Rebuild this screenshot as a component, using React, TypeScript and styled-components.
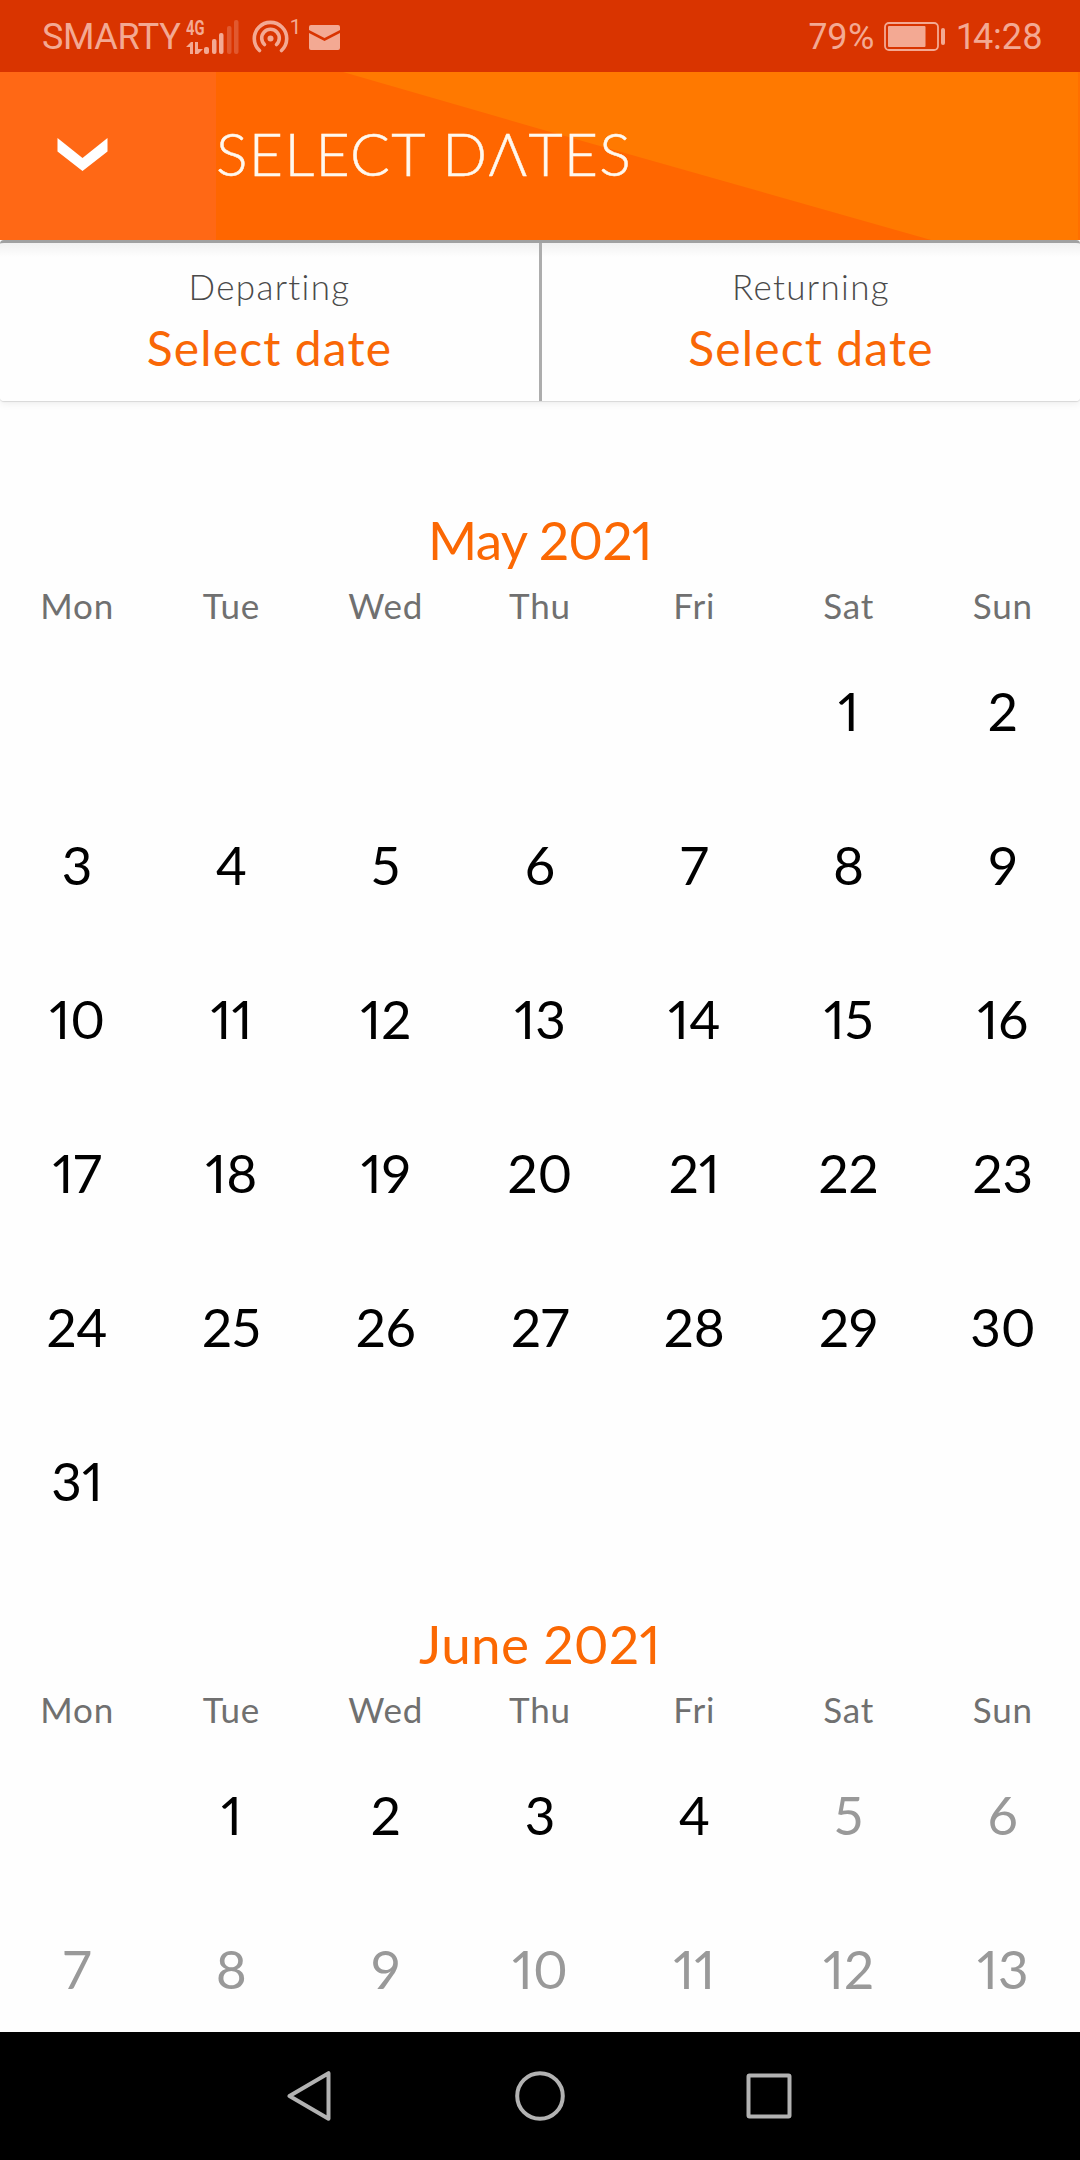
import React from 'react';
import styled, { createGlobalStyle } from 'styled-components';

const GlobalStyle = createGlobalStyle`
  *, *::before, *::after { box-sizing: border-box; }
  html, body { margin: 0; padding: 0; background: #fefefe; }
  body { font-family: Lato, "Open Sans", sans-serif; font-variant-numeric: proportional-nums; }
`;

const Screen = styled.div`
  width: 1080px;
  height: 2160px;
  display: flex;
  flex-direction: column;
  overflow: hidden;
  background: #fefefe;
`;

const StatusBar = styled.div`
  flex: none;
  height: 72px;
  padding: 2px 37px 0 42px;
  display: flex;
  align-items: center;
  justify-content: space-between;
  background: #d93400;
  color: #f3a993;
  font-family: Roboto, sans-serif;
  font-size: 36px;
`;

const StatusGroup = styled.div`
  display: flex;
  align-items: center;
`;

const StatusText = styled.span<{ $spacing?: number }>`
  letter-spacing: ${(p) => p.$spacing ?? 0}px;
  white-space: nowrap;
`;

const SignalBlock = styled.div`
  display: flex;
  align-items: flex-end;
  height: 34px;
  margin-left: 6px;
`;

const NetworkColumn = styled.div`
  display: flex;
  flex-direction: column;
  justify-content: space-between;
  width: 18px;
  height: 34px;
`;

const NetworkLabel = styled.span`
  font-size: 21px;
  font-weight: 700;
  line-height: 16px;
  width: 25px;
  transform: scaleX(0.7);
  transform-origin: left;
`;

const HotspotCount = styled.span`
  font-size: 21px;
  line-height: 16px;
  align-self: flex-start;
  margin: 0 9px 0 1px;
`;

const NotificationGroup = styled.div`
  display: flex;
  align-items: center;
  height: 36px;
  margin-left: 12px;
`;

const Icon = styled.svg`
  display: block;
  flex: none;
`;

const BatteryIcon = styled(Icon)`
  margin: 0 12px 0 10px;
`;

const Header = styled.header`
  flex: none;
  position: relative;
  z-index: 1;
  height: 168px;
  display: flex;
  background:
    linear-gradient(#ff6f00, #ff6f00) right / 2px 100% no-repeat,
    #ff6600;
`;

const CloseButton = styled.button`
  width: 216px;
  height: 168px;
  padding: 0 0 3px 57px;
  border: 0;
  background: #ff6815;
  display: flex;
  align-items: center;
`;

const TitleArea = styled.div`
  flex: 1;
  margin-right: 2px;
  padding-bottom: 4px;
  display: flex;
  align-items: center;
  background: #ff7900;
  position: relative;
`;

const Facet = styled.div`
  position: absolute;
  inset: 0;
  background: #ff6600;
  clip-path: polygon(0 0, 127px 0, 324px 57px, 715px 168px, 0 168px);
`;

const Title = styled.h1`
  position: relative;
  margin: 0;
  font-size: 59px;
  line-height: 72px;
  font-weight: 300;
  letter-spacing: 1.3px;
  color: #fff8ee;
  -webkit-text-stroke: 0.5px #fff8ee;
  white-space: nowrap;
`;

const TripCard = styled.section`
  flex: none;
  height: 161px;
  display: grid;
  grid-template-columns: 539px 3px 538px;
  border-top: 3px solid #a1a1a1;
  border-radius: 4px;
  background: linear-gradient(#f1f1f1, #fefefe 14px);
  box-shadow: 0 1px 1px #d8d8d8, 0 2px 8px #ececec;
`;

const TripField = styled.button`
  padding: 21px 0 0;
  border: 0;
  background: none;
  display: flex;
  flex-direction: column;
  align-items: center;
  font-family: inherit;
`;

const TripDivider = styled.div`
  background: #adadad;
`;

const TripLabel = styled.span`
  font-size: 35px;
  line-height: 44px;
  font-weight: 300;
  letter-spacing: 1.3px;
  color: #4a4a4a;
`;

const TripValue = styled.span`
  margin-top: 10px;
  font-size: 48px;
  line-height: 60px;
  letter-spacing: 1.1px;
  color: #f96706;
`;

const Calendar = styled.main`
  flex: 1;
  min-height: 0;
  overflow: hidden;
  padding-top: 53px;
`;

const Month = styled.section`
  display: grid;
  grid-template-rows: 126px 54px;
  grid-auto-rows: auto;
`;

const MonthName = styled.h2<{ $spacing: number }>`
  margin: 0;
  padding-top: 53px;
  text-align: center;
  font-size: 53px;
  line-height: 66px;
  font-weight: 400;
  letter-spacing: ${(p) => p.$spacing}px;
  color: #fb6803;
`;

const Week = styled.div`
  display: grid;
  grid-template-columns: repeat(7, 1fr);
  justify-items: center;
`;

const Weekday = styled.span`
  font-size: 35px;
  line-height: 50px;
  letter-spacing: 0.8px;
  color: #707070;
`;

const Day = styled.button<{ $muted?: boolean; $start?: number }>`
  height: 154px;
  padding: 0;
  border: 0;
  background: none;
  font-family: inherit;
  font-variant-numeric: inherit;
  font-size: 53px;
  line-height: 154px;
  color: ${(p) => (p.$muted ? '#999999' : '#000000')};
  grid-column-start: ${(p) => p.$start ?? 'auto'};
`;

const NavBar = styled.nav`
  flex: none;
  height: 128px;
  display: flex;
  align-items: center;
  justify-content: center;
  background: #000;
`;

const NavButton = styled.button<{ $shift?: number }>`
  width: 229px;
  height: 128px;
  padding: 0 ${(p) => p.$shift ?? 0}px 0 0;
  border: 0;
  background: none;
  display: flex;
  align-items: center;
  justify-content: center;
`;

const weekdays = ['Mon', 'Tue', 'Wed', 'Thu', 'Fri', 'Sat', 'Sun'];

type MonthData = { name: string; spacing: number; start: number; days: number; mutedFrom?: number };

const months: MonthData[] = [
  { name: 'May 2021', spacing: -0.7, start: 6, days: 31 },
  { name: 'June 2021', spacing: 0.4, start: 2, days: 13, mutedFrom: 5 },
];

function MonthView({ name, spacing, start, days, mutedFrom = 99 }: MonthData) {
  return (
    <Month>
      <MonthName $spacing={spacing}>{name}</MonthName>
      <Week>
        {weekdays.map((d) => (
          <Weekday key={d}>{d}</Weekday>
        ))}
      </Week>
      <Week>
        {Array.from({ length: days }, (_, i) => i + 1).map((d) => (
          <Day key={d} $start={d === 1 ? start : undefined} $muted={d >= mutedFrom}>
            {d}
          </Day>
        ))}
      </Week>
    </Month>
  );
}

export default function App() {
  return (
    <Screen>
      <GlobalStyle />
      <StatusBar>
        <StatusGroup>
          <StatusText $spacing={-0.4}>SMARTY</StatusText>
          <SignalBlock>
            <NetworkColumn>
              <NetworkLabel>4G</NetworkLabel>
              <Icon width="17" height="12" viewBox="0 0 17 12" fill="currentColor">
                <path d="M0 5 5 0h2v12H4V5zM9 0h3v7h5l-5 5H9z" />
              </Icon>
            </NetworkColumn>
            <Icon width="36" height="34" viewBox="0 0 36 34" fill="currentColor">
              <rect x="0" y="27" width="5" height="7" rx="2" />
              <rect x="8" y="19" width="4.5" height="15" rx="2" />
              <rect x="15" y="13" width="4.5" height="21" rx="2" />
              <rect x="23" y="6" width="4.5" height="28" rx="2" opacity="0.32" />
              <rect x="30" y="0" width="4.5" height="34" rx="2" opacity="0.32" />
            </Icon>
          </SignalBlock>
          <NotificationGroup>
            <Icon width="37" height="34" viewBox="0 0 37 34" fill="none" stroke="currentColor" strokeWidth="3.6" strokeLinecap="round">
              <path d="M7.500 30.500a16.200 16.200 0 1 1 22 0" />
              <path d="M12.500 24.500a8.800 8.800 0 1 1 12 0" />
              <circle cx="18.500" cy="18.500" r="3" fill="currentColor" stroke="none" />
            </Icon>
            <HotspotCount>1</HotspotCount>
            <Icon width="31" height="25" viewBox="0 0 31 25" fill="currentColor">
              <path d="M2 0h27a2 2 0 0 1 2 2v3L15.500 13 0 5V2a2 2 0 0 1 2-2z" />
              <path d="M0 8l15.500 8L31 8v15a2 2 0 0 1-2 2H2a2 2 0 0 1-2-2z" />
            </Icon>
          </NotificationGroup>
        </StatusGroup>
        <StatusGroup>
          <StatusText>79%</StatusText>
          <BatteryIcon width="61" height="30" viewBox="0 0 61 30" fill="currentColor">
            <rect x="1" y="1" width="53" height="27" rx="4" fill="none" stroke="currentColor" strokeWidth="1.8" />
            <rect x="4" y="4" width="37.500" height="21" rx="1" />
            <rect x="57" y="6" width="4" height="17" rx="2" />
          </BatteryIcon>
          <StatusText>14:28</StatusText>
        </StatusGroup>
      </StatusBar>

      <Header>
        <CloseButton aria-label="Close">
          <Icon width="51" height="34" viewBox="0 0 51 34" fill="#fff">
            <path d="M0.500 0 25.500 20 50.500 0v13.500L25.500 33 0.500 13.500z" />
          </Icon>
        </CloseButton>
        <TitleArea>
          <Facet />
          <Title>SELECT DΛTES</Title>
        </TitleArea>
      </Header>

      <TripCard>
        <TripField>
          <TripLabel>Departing</TripLabel>
          <TripValue>Select date</TripValue>
        </TripField>
        <TripDivider />
        <TripField>
          <TripLabel>Returning</TripLabel>
          <TripValue>Select date</TripValue>
        </TripField>
      </TripCard>

      <Calendar>
        {months.map((m) => (
          <MonthView key={m.name} {...m} />
        ))}
      </Calendar>

      <NavBar>
        <NavButton aria-label="Back" $shift={3}>
          <Icon width="46" height="50" viewBox="0 0 46 50" fill="none" stroke="#b2b2b2" strokeWidth="4" strokeLinejoin="round">
            <path d="M41.500 2.200v45.600L2.500 25z" />
          </Icon>
        </NavButton>
        <NavButton aria-label="Home">
          <Icon width="50" height="50" viewBox="0 0 50 50" fill="none" stroke="#b2b2b2" strokeWidth="4">
            <circle cx="25" cy="25" r="22.800" />
          </Icon>
        </NavButton>
        <NavButton aria-label="Recents">
          <Icon width="46" height="46" viewBox="0 0 46 46" fill="none" stroke="#b2b2b2" strokeWidth="4" strokeLinejoin="round">
            <rect x="2.500" y="2.500" width="41" height="41" rx="1" />
          </Icon>
        </NavButton>
      </NavBar>
    </Screen>
  );
}
